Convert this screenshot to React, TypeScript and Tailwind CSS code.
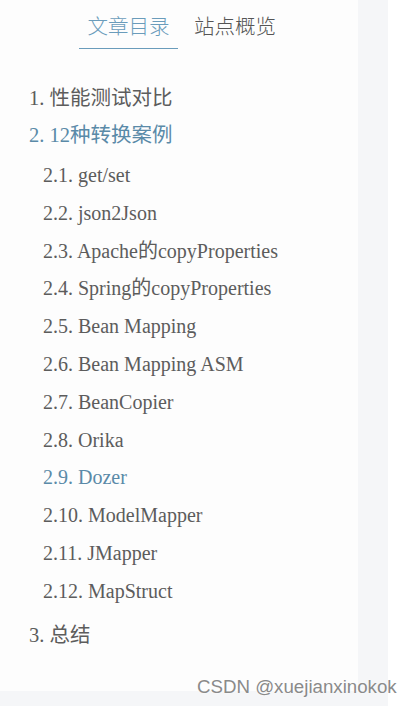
const subs = [
  "2.1. get/set",
  "2.2. json2Json",
  "2.3. Apache的copyProperties",
  "2.4. Spring的copyProperties",
  "2.5. Bean Mapping",
  "2.6. Bean Mapping ASM",
  "2.7. BeanCopier",
  "2.8. Orika",
  "2.9. Dozer",
  "2.10. ModelMapper",
  "2.11. JMapper",
  "2.12. MapStruct",
];

const serif = "font-['Liberation_Serif','Noto_Sans_CJK_SC',serif]";

export default function App() {
  return (
    <div className="w-[412px] h-[706px] bg-white flex flex-col overflow-hidden relative">
      <div className="flex h-[691px]">
        {/* TOC panel */}
        <div className="w-[358px] bg-[#fdfdfd] flex flex-col">
          <div className="flex pt-[10px] pl-[79px]">
            <div className="w-[99px] h-[39px] border-b-[1.5px] border-[#6a9cbb] flex justify-center">
              <span className="text-[20.5px] leading-[30px] text-[#6a9cbb] font-['Noto_Sans_CJK_SC',sans-serif] font-light">
                文章目录
              </span>
            </div>
            <div className="ml-[16px] h-[39px]">
              <span className="text-[20.5px] leading-[30px] text-[#555] font-['Noto_Sans_CJK_SC',sans-serif] font-light">
                站点概览
              </span>
            </div>
          </div>

          <ul className={`mt-[36px] pl-[29px] text-[#5c5c5c] ${serif}`}>
            <li className="text-[20.5px] leading-[26px]">1. 性能测试对比</li>
            <li className="text-[20.5px] leading-[26px] mt-[11px] text-[#5a8aa8]">2. 12种转换案例</li>
            <li>
              <ul className="pl-[14px] mt-[15px] flex flex-col gap-[13.8px]">
                {subs.map((s) => (
                  <li
                    key={s}
                    className={`text-[20px] leading-[24px] ${s === "2.9. Dozer" ? "text-[#5a8aa8]" : ""}`}
                  >
                    {s}
                  </li>
                ))}
              </ul>
            </li>
            <li className="text-[20.5px] leading-[26px] mt-[19px]">3. 总结</li>
          </ul>
        </div>
        <div className="w-[30px] bg-[#f5f6f8]" />
        <div className="flex-1 bg-white" />
      </div>
      <div className="flex flex-1">
        <div className="w-[388px] bg-[#f5f6f8]" />
        <div className="flex-1 bg-white" />
      </div>
      <span className="absolute left-[197px] top-[675px] text-[18.7px] leading-[24px] text-[#8a8a8a] font-['Liberation_Sans',sans-serif] [text-shadow:0_0_2px_#fff]">
        CSDN @xuejianxinokok
      </span>
    </div>
  );
}
